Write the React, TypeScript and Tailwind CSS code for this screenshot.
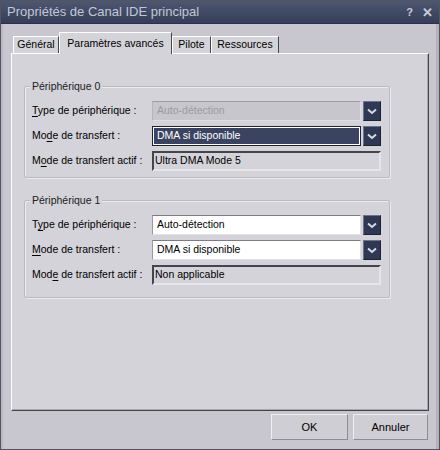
import React from "react";

const Chevron = () => (
  <svg width="10" height="7" viewBox="0 0 10 7">
    <path d="M1 1.5 L5 5 L9 1.5" fill="none" stroke="#d7dbe6" strokeWidth="2" />
  </svg>
);

const DropBtn = () => (
  <div className="w-[18px] h-[20px] ml-[2px] bg-[#2f3852] border border-t-[#6b7590] border-l-[#6b7590] border-r-[#1c2236] border-b-[#1c2236] flex items-center justify-center">
    <Chevron />
  </div>
);

type ComboKind = "disabled" | "selected" | "normal";

const Combo = ({ text, kind }: { text: string; kind: ComboKind }) => {
  let box = "";
  let txt = "";
  if (kind === "disabled") {
    box = "bg-[#c7c6cd] border-t-[#9e9da5] border-l-[#b5b4bb] border-r-[#dedde3] border-b-[#dedde3]";
    txt = "text-[#9c9ba3]";
  } else if (kind === "selected") {
    box = "bg-[#3a4461] border-[#1e2438] shadow-[inset_0_0_0_1px_#ffffff]";
    txt = "text-white";
  } else {
    box = "bg-white border-t-[#7d7c84] border-l-[#9a99a0] border-r-[#e2e1e6] border-b-[#e2e1e6]";
    txt = "text-black";
  }
  return (
    <div className="flex items-center">
      <div className={`w-[209px] h-[20px] border flex items-center pl-[4px] ${box}`}>
        <span className={`text-[10.5px] ${txt}`}>{text}</span>
      </div>
      <DropBtn />
    </div>
  );
};

const Field = ({ text }: { text: string }) => (
  <div className="w-[229px] h-[20px] border-2 border-t-[#45444c] border-l-[#45444c] border-r-[#e6e5ea] border-b-[#e6e5ea] bg-[#d4d3d9] flex items-center pl-[1px]">
    <span className="text-[10.5px] text-black">{text}</span>
  </div>
);

const Label = ({ pre, u, post }: { pre: string; u: string; post: string }) => (
  <div className="w-[120px] text-[10.5px] text-black whitespace-nowrap">
    {pre}
    <span className="underline underline-offset-2">{u}</span>
    {post}
  </div>
);

const Group = ({
  title,
  rows,
  pad,
}: {
  title: string;
  rows: React.ReactNode[];
  pad: string;
}) => (
  <div className={`relative w-[366px] border border-[#bab9c0] shadow-[inset_1px_1px_0_#ecebf0,1px_1px_0_#ecebf0] rounded-[2px] px-[7px] ${pad} flex flex-col gap-[5px]`}>
    <span className="absolute -top-[8px] left-[5px] px-[2px] bg-[#d4d3d9] text-[10.5px] text-[#202020] leading-[14px]">
      {title}
    </span>
    {rows}
  </div>
);

const Row = ({ label, children }: { label: React.ReactNode; children: React.ReactNode }) => (
  <div className="flex items-center h-[20px]">
    {label}
    {children}
  </div>
);

export default function App() {
  return (
    <div className="w-[440px] h-[450px] flex flex-col bg-[#c8c7cf] border border-[#55545c] font-['Liberation_Sans',Arial,sans-serif] overflow-hidden">
      {/* Title bar */}
      <div className="h-[23px] shrink-0 bg-gradient-to-b from-[#4d5772] to-[#343e57] flex items-center justify-between pl-[6px] pr-[6px] border-b border-[#2a3146]">
        <span className="text-[13px] text-[#c3c8d6]">Propriétés de Canal IDE principal</span>
        <div className="flex items-center gap-[9px] text-[#c9cdd8] font-bold">
          <span className="text-[11px]">?</span>
          <span className="text-[13px] leading-none">✕</span>
        </div>
      </div>

      {/* Body */}
      <div className="flex-1 flex flex-col pl-[8px] pr-[7px] pt-[7px] border-l-2 border-l-[#b9b8c0] border-r-[3px] border-r-[#b3b2ba]">
        {/* Tabs */}
        <div className="flex items-end h-[22px] pl-[2px] relative z-10">
          <div className="w-[46px] h-[17px] bg-[#d4d3d9] border-t border-l border-white border-r border-r-[#45444c] flex items-center justify-center text-[10.5px] text-black">
            Général
          </div>
          <div className="w-[113px] h-[22px] -mb-[1px] bg-[#d4d3d9] border-t border-l border-white border-r border-r-[#45444c] flex items-start pt-[3px] justify-center text-[10.5px] text-black">
            Paramètres avancés
          </div>
          <div className="w-[39px] h-[17px] bg-[#d4d3d9] border-t border-l border-white border-r border-r-[#45444c] flex items-center justify-center text-[10.5px] text-black">
            Pilote
          </div>
          <div className="w-[68px] h-[17px] bg-[#d4d3d9] border-t border-l border-white border-r border-r-[#45444c] flex items-center justify-center text-[10.5px] text-black">
            Ressources
          </div>
        </div>

        {/* Panel */}
        <div className="h-[358px] bg-[#d4d3d9] border border-t-white border-l-white border-r-[#45444c] border-b-[#45444c] shadow-[inset_-1px_-1px_0_#a9a8b0] pl-[12px] pt-[32px] flex flex-col gap-[22px]">
          <Group
            title="Périphérique 0"
            pad="pt-[14px] pb-[6px]"
            rows={[
              <Row key="a" label={<Label pre="" u="T" post="ype de périphérique :" />}>
                <Combo text="Auto-détection" kind="disabled" />
              </Row>,
              <Row key="b" label={<Label pre="Mo" u="d" post="e de transfert :" />}>
                <Combo text="DMA si disponible" kind="selected" />
              </Row>,
              <Row key="c" label={<Label pre="M" u="o" post="de de transfert actif :" />}>
                <Field text="Ultra DMA Mode 5" />
              </Row>,
            ]}
          />
          <Group
            title="Périphérique 1"
            pad="pt-[14px] pb-[12px]"
            rows={[
              <Row key="a" label={<Label pre="T" u="y" post="pe de périphérique :" />}>
                <Combo text="Auto-détection" kind="normal" />
              </Row>,
              <Row key="b" label={<Label pre="" u="M" post="ode de transfert :" />}>
                <Combo text="DMA si disponible" kind="normal" />
              </Row>,
              <Row key="c" label={<Label pre="Mod" u="e" post=" de transfert actif :" />}>
                <Field text="Non applicable" />
              </Row>,
            ]}
          />
        </div>

        {/* Buttons */}
        <div className="flex justify-end gap-[5px] pt-[3px] pr-[1px]">
          <div className="w-[77px] h-[26px] bg-[#cfced5] border border-t-[#efeff3] border-l-[#efeff3] border-r-[#8e8d95] border-b-[#8e8d95] flex items-center justify-center text-[11px] text-black">
            OK
          </div>
          <div className="w-[75px] h-[26px] bg-[#cfced5] border border-t-[#efeff3] border-l-[#efeff3] border-r-[#8e8d95] border-b-[#8e8d95] flex items-center justify-center text-[11px] text-black">
            Annuler
          </div>
        </div>
      </div>
    </div>
  );
}
